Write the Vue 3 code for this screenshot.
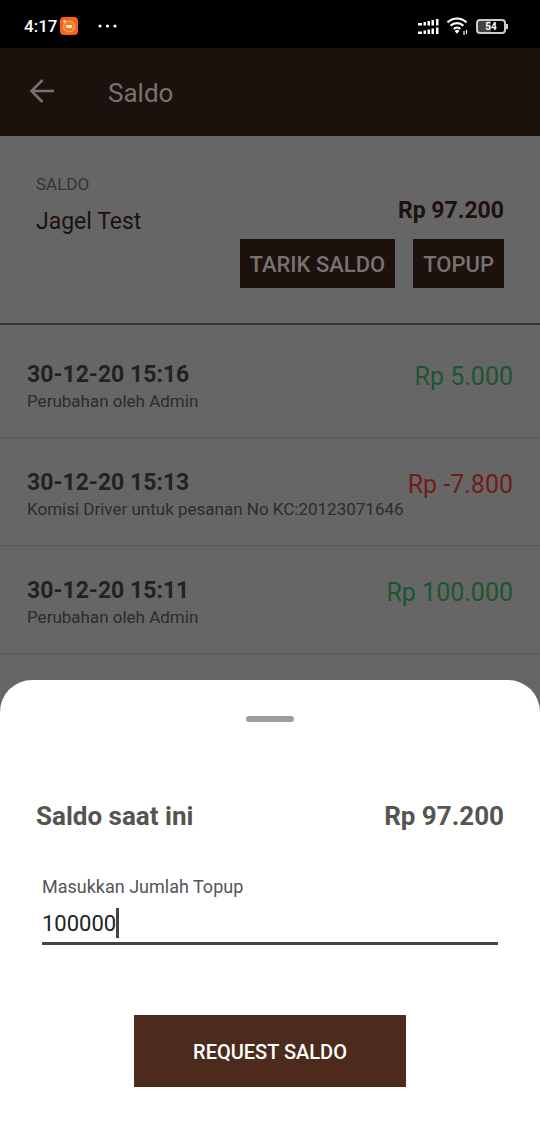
<script setup>
import { ref } from 'vue'

const amount = ref('100000')

const entries = [
  { date: '30-12-20 15:16', note: 'Perubahan oleh Admin', amount: 'Rp 5.000', debit: false },
  { date: '30-12-20 15:13', note: 'Komisi Driver untuk pesanan No KC:20123071646', amount: 'Rp -7.800', debit: true },
  { date: '30-12-20 15:11', note: 'Perubahan oleh Admin', amount: 'Rp 100.000', debit: false },
]
</script>

<template>
  <div class="screen">
    <div class="status">
      <span class="clock">4:17</span>
      <svg class="app-icon" width="18" height="18" viewBox="0 0 18 18" aria-hidden="true">
        <rect width="18" height="18" rx="4" fill="#f4651c" />
        <circle cx="9" cy="9.500" r="5.500" fill="#f9771c" stroke="#ffab6c" stroke-width="1.200" />
        <path d="M6 8h6v1a3 2.200 0 0 1-6 0z" fill="#fff0e2" />
        <circle cx="4.500" cy="4.200" r="1.200" fill="#ffe4cc" />
      </svg>
      <svg class="dots" width="20" height="4" viewBox="0 0 20 4" fill="#fff" aria-hidden="true">
        <circle cx="2" cy="2" r="1.600" /><circle cx="9.500" cy="2" r="1.600" /><circle cx="17" cy="2" r="1.600" />
      </svg>
      <div class="indicators">
        <svg width="22" height="18" viewBox="0 0 22 18" fill="#fff" aria-hidden="true">
          <path d="M0 6h4v2.500H0zM5.500 5h2.500v3.500H5.500zM9.500 4H12v4.500H9.500zM13.500 3H16v5.500h-2.500zM18 2h2.500v6.500H18zM0 14.500h4V17H0zM5.500 13.500h2.500V17H5.500zM9.500 12.500H12V17H9.500zM13.500 11.500H16V17h-2.500zM18 10.500h2.500V17H18z" />
        </svg>
        <svg width="24" height="18" viewBox="0 0 24 18" fill="none" stroke="#fff" stroke-width="2.200" aria-hidden="true">
          <path d="M1.500 5.400a13.500 13.500 0 0 1 19 0M4.600 8.700a9 9 0 0 1 12.800 0M7.700 12a4.800 4.800 0 0 1 6.600 0" />
          <path d="M8.600 13.900a3.500 3.500 0 0 1 4.800 0L11 16.800z" fill="#fff" stroke="none" />
          <path d="M18 14v4M20.500 13v4" stroke-width="1.200" />
        </svg>
        <span class="battery">54</span>
      </div>
    </div>

    <header class="bar">
      <button class="back" type="button" aria-label="Kembali">
        <svg width="26" height="26" viewBox="0 0 26 26" fill="none" stroke="#777270" stroke-width="2.500" aria-hidden="true">
          <path d="M25 12H3M13.500 1L2.500 12l11 11" />
        </svg>
      </button>
      <h1>Saldo</h1>
    </header>

    <section class="account">
      <div>
        <p class="label">SALDO</p>
        <p class="name">Jagel Test</p>
      </div>
      <div class="account-side">
        <strong class="balance">Rp 97.200</strong>
        <div class="actions">
          <button type="button">TARIK SALDO</button>
          <button type="button">TOPUP</button>
        </div>
      </div>
    </section>

    <ul class="entries">
      <li v-for="entry in entries" :key="entry.date">
        <div>
          <p class="date">{{ entry.date }}</p>
          <p class="note">{{ entry.note }}</p>
        </div>
        <span class="amount" :class="{ debit: entry.debit }">{{ entry.amount }}</span>
      </li>
    </ul>

    <form class="sheet" @submit.prevent>
      <div class="handle"></div>
      <div class="current">
        <span>Saldo saat ini</span>
        <span>Rp 97.200</span>
      </div>
      <div class="field">
        <label for="topup">Masukkan Jumlah Topup</label>
        <div class="entry-line">
          <input id="topup" v-model="amount" type="text" inputmode="numeric" />
          <span class="caret"></span>
        </div>
      </div>
      <button class="request" type="submit">REQUEST SALDO</button>
    </form>
  </div>
</template>

<style>
body {
  background: #666;
}
</style>

<style scoped>
.screen {
  min-height: 100vh;
  background: #666;
  font-family: Roboto, "Liberation Sans", sans-serif;
}
.screen * {
  box-sizing: border-box;
}
p, h1, ul {
  margin: 0;
  padding: 0;
}
button, input {
  font-family: inherit;
  border: 0;
  border-radius: 0;
  padding: 0;
}
.status {
  display: flex;
  align-items: center;
  height: 48px;
  padding: 4px 34px 0 24px;
  background: #000;
  color: #fff;
}
.clock {
  font-size: 17px;
  font-weight: 500;
}
.app-icon {
  margin-left: 3px;
}
.dots {
  margin-left: 20px;
}
.indicators {
  display: flex;
  align-items: center;
  gap: 6px;
  margin-left: auto;
}
.battery {
  position: relative;
  width: 30px;
  height: 15px;
  border: 2px solid #ccc;
  border-radius: 4px;
  font-size: 10px;
  font-weight: 700;
  line-height: 12px;
  text-align: center;
  background: linear-gradient(90deg, #444 50%, #000 50%);
}
.battery::after {
  content: "";
  position: absolute;
  top: 3px;
  right: -4px;
  width: 2px;
  height: 5px;
  background: #ccc;
}
.bar {
  display: flex;
  align-items: center;
  gap: 53px;
  height: 88px;
  padding: 0 29px;
  background: #1d110d;
  color: #777270;
}
.back {
  display: flex;
  background: none;
}
h1 {
  padding-top: 2px;
  font-size: 26px;
  font-weight: 400;
}
.account {
  display: flex;
  justify-content: space-between;
  height: 189px;
  padding: 36px 36px 0;
  border-bottom: 2px solid #333;
  color: #1d110d;
}
.label {
  padding-top: 2px;
  font-size: 17px;
  line-height: 20px;
  color: #343434;
}
.name {
  margin-top: 14px;
  font-size: 23px;
  line-height: 28px;
}
.account-side {
  display: flex;
  flex-direction: column;
  align-items: flex-end;
  padding-top: 25px;
}
.balance {
  font-size: 23px;
  font-weight: 700;
  line-height: 28px;
}
.actions {
  display: flex;
  gap: 18px;
  margin-top: 14px;
}
.actions button {
  height: 49px;
  padding: 2px 10px 0;
  background: #1d110d;
  color: #777270;
  font-size: 22px;
  font-weight: 500;
}
.entries {
  padding-top: 5px;
  list-style: none;
}
.entries li {
  display: flex;
  justify-content: space-between;
  height: 108px;
  padding: 31px 27px 0;
  border-bottom: 1px solid #595959;
  white-space: nowrap;
}
.date {
  font-size: 23px;
  font-weight: 700;
  line-height: 28px;
  color: #222;
}
.note {
  font-size: 17px;
  line-height: 24px;
  color: #2c2c2c;
}
.amount {
  font-size: 25px;
  line-height: 32px;
  color: #1d5530;
}
.amount.debit {
  color: #701c1c;
}
.sheet {
  position: fixed;
  right: 0;
  bottom: 0;
  left: 0;
  display: flex;
  flex-direction: column;
  padding: 36px 36px;
  border-radius: 32px 32px 0 0;
  background: #fff;
}
.handle {
  align-self: center;
  width: 48px;
  height: 6px;
  border-radius: 3px;
  background: #9e9e9e;
}
.current {
  display: flex;
  justify-content: space-between;
  margin-top: 78px;
  font-size: 26px;
  font-weight: 700;
  line-height: 32px;
  color: #555550;
}
.field {
  margin: 43px 6px 0;
}
.field label {
  display: block;
  font-size: 18px;
  line-height: 24px;
  color: #555;
}
.entry-line {
  display: flex;
  align-items: flex-end;
  height: 46px;
  padding-bottom: 4px;
  border-bottom: 3px solid #444;
}
.entry-line input {
  field-sizing: content;
  outline: 0;
  background: none;
  font-size: 22px;
  line-height: 28px;
  color: #222;
}
.caret {
  width: 3px;
  height: 30px;
  background: #444;
}
.request {
  align-self: center;
  width: 58%;
  height: 72px;
  padding-top: 2px;
  margin-top: 70px;
  background: #4c2b1c;
  color: #fff;
  font-size: 20px;
  font-weight: 500;
}
</style>
